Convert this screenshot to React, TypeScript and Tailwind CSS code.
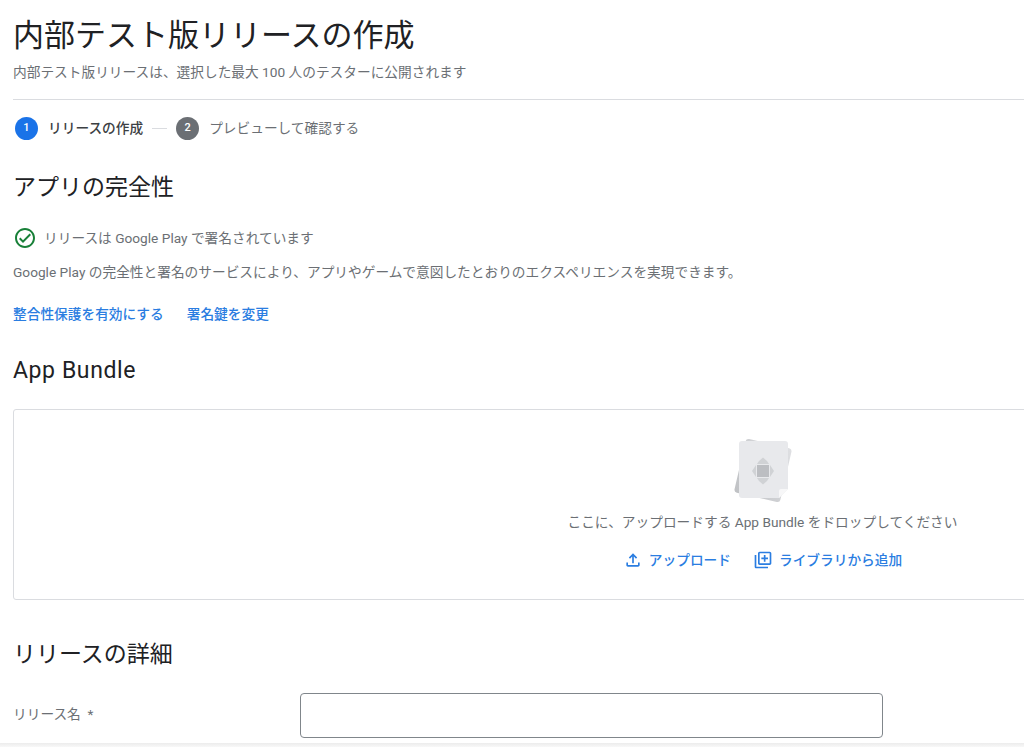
const font = "font-['Roboto','Noto_Sans_CJK_JP',sans-serif]";

const BundlePicture = () => (
  <svg width="64" height="70" viewBox="0 0 64 70">
    <defs>
      <linearGradient id="backSheet" x1="0" y1="1" x2="1" y2="0">
        <stop offset="0" stopColor="#bfc1c4" />
        <stop offset="1" stopColor="#dfe0e3" />
      </linearGradient>
    </defs>
    <rect x="8.500" y="9" width="47" height="55" rx="3" fill="url(#backSheet)" transform="rotate(13 32 36.500)" />
    <path d="M8 10a3 3 0 0 1 3-3h43a3 3 0 0 1 3 3v45l-9 9H11a3 3 0 0 1-3-3z" fill="#e8e9ec" />
    <path d="M57 55l-9 9v-7a2 2 0 0 1 2-2z" fill="#f7f7f8" />
    <path d="M26 30h12l-2-3-4-3.500-4 3.500zM26 44h12l-2 3-4 3.500-4-3.500zM25 31v12l-4-6zM39 31v12l4-6z" fill="#d0d2d5" />
    <rect x="26" y="31" width="12" height="12" fill="#bcbec2" />
  </svg>
);

const UploadIcon = () => (
  <svg width="20" height="20" viewBox="0 0 24 24" fill="currentColor">
    <path d="M18 15v3H6v-3H4v3c0 1.100.9 2 2 2h12c1.100 0 2-.9 2-2v-3h-2zM7 9l1.410 1.410L11 7.830V16h2V7.830l2.590 2.580L17 9l-5-5-5 5z" />
  </svg>
);

const LibraryAddIcon = () => (
  <svg width="20" height="20" viewBox="0 0 24 24" fill="currentColor">
    <path d="M4 6H2v14c0 1.100.9 2 2 2h14v-2H4V6zm16-4H8c-1.100 0-2 .9-2 2v12c0 1.100.9 2 2 2h12c1.100 0 2-.9 2-2V4c0-1.100-.9-2-2-2zm0 14H8V4h12v12zm-7-2h2v-3h3V9h-3V6h-2v3h-3v2h3z" />
  </svg>
);

const CheckCircleIcon = () => (
  <svg width="24" height="24" viewBox="0 0 24 24" fill="#188038">
    <path d="M16.590 7.580L10 14.170l-2.590-2.580L6 13l4 4 8-8-1.410-1.420zM12 2C6.480 2 2 6.480 2 12s4.480 10 10 10 10-4.480 10-10S17.520 2 12 2zm0 18c-4.420 0-8-3.580-8-8s3.580-8 8-8 8 3.580 8 8-3.580 8-8 8z" />
  </svg>
);

export default function App() {
  return (
    <div className={`${font} h-[747px] w-[1024px] overflow-hidden bg-white text-[#202124] relative`}>
      <div className="pl-[13px]">
        <h1 className="pt-[15px] text-[31px] leading-[42px]">内部テスト版リリースの作成</h1>
        <p className="mt-[5px] text-[13.700px] leading-[20px] text-[#6b6f74]">
          内部テスト版リリースは、選択した最大 100 人のテスターに公開されます
        </p>
        <div className="mt-[17px] h-px bg-[#dadce0]" />

        <div className="mt-[16px] flex items-center pl-[2px] text-[13.700px] leading-[24px]">
          <span className="flex h-[23px] w-[23px] items-center justify-center rounded-full bg-[#1a73e8] text-[11px] font-medium text-white">1</span>
          <span className="ml-[10px] font-medium text-[#3c4043]">リリースの作成</span>
          <span className="mx-[9px] h-px w-[15px] bg-[#dadce0]" />
          <span className="flex h-[23px] w-[23px] items-center justify-center rounded-full bg-[#6b6f74] text-[11px] font-medium text-white">2</span>
          <span className="ml-[10px] text-[#6b6f74]">プレビューして確認する</span>
        </div>

        <h2 className="mt-[32px] text-[23px] leading-[32px]">アプリの完全性</h2>

        <div className="mt-[22px] flex items-center text-[13.700px] leading-[24px] text-[#6b6f74]">
          <CheckCircleIcon />
          <span className="ml-[7px]">リリースは Google Play で署名されています</span>
        </div>
        <p className="mt-[10px] text-[13.700px] leading-[24px] text-[#6b6f74]">
          Google Play の完全性と署名のサービスにより、アプリやゲームで意図したとおりのエクスペリエンスを実現できます。
        </p>

        <div className="mt-[18px] flex gap-[23px] text-[13.700px] leading-[24px] font-medium text-[#2a7de1]">
          <span>整合性保護を有効にする</span>
          <span>署名鍵を変更</span>
        </div>

        <h2 className="mt-[29px] text-[23px] leading-[32px] tracking-[0.6px]">App Bundle</h2>

        <div className="mt-[22px] -mr-[4px] flex h-[191px] flex-col items-center rounded-[3px] border border-[#dadce0] pl-[484px] pt-[24px]">
          <BundlePicture />
          <p className="mt-[8px] text-[13.700px] leading-[20px] text-[#6b6f74]">ここに、アップロードする App Bundle をドロップしてください</p>
          <div className="mt-[16px] flex gap-[22px] text-[13.700px] leading-[24px] font-medium text-[#2a7de1]">
            <span className="flex items-center gap-[6px]">
              <UploadIcon />
              アップロード
            </span>
            <span className="flex items-center gap-[6px]">
              <LibraryAddIcon />
              ライブラリから追加
            </span>
          </div>
        </div>

        <h2 className="mt-[39px] text-[23px] leading-[32px]">リリースの詳細</h2>

        <div className="mt-[22px] flex">
          <label className="mt-[9px] w-[287px] whitespace-pre text-[13.700px] leading-[24px] text-[#6b6f74]">リリース名  *</label>
          <div className="w-[583px]">
            <div className="h-[45px] rounded-[4px] border border-[#80868b]" />
            <p className="mt-[3px] text-right text-[11.500px] leading-[16px] text-[#6b6f74]">0 / 50</p>
          </div>
        </div>
      </div>
      <div className="absolute bottom-0 left-0 h-[4px] w-full bg-linear-to-b from-[#ececec] to-[#f8f8f8]" />
    </div>
  );
}
